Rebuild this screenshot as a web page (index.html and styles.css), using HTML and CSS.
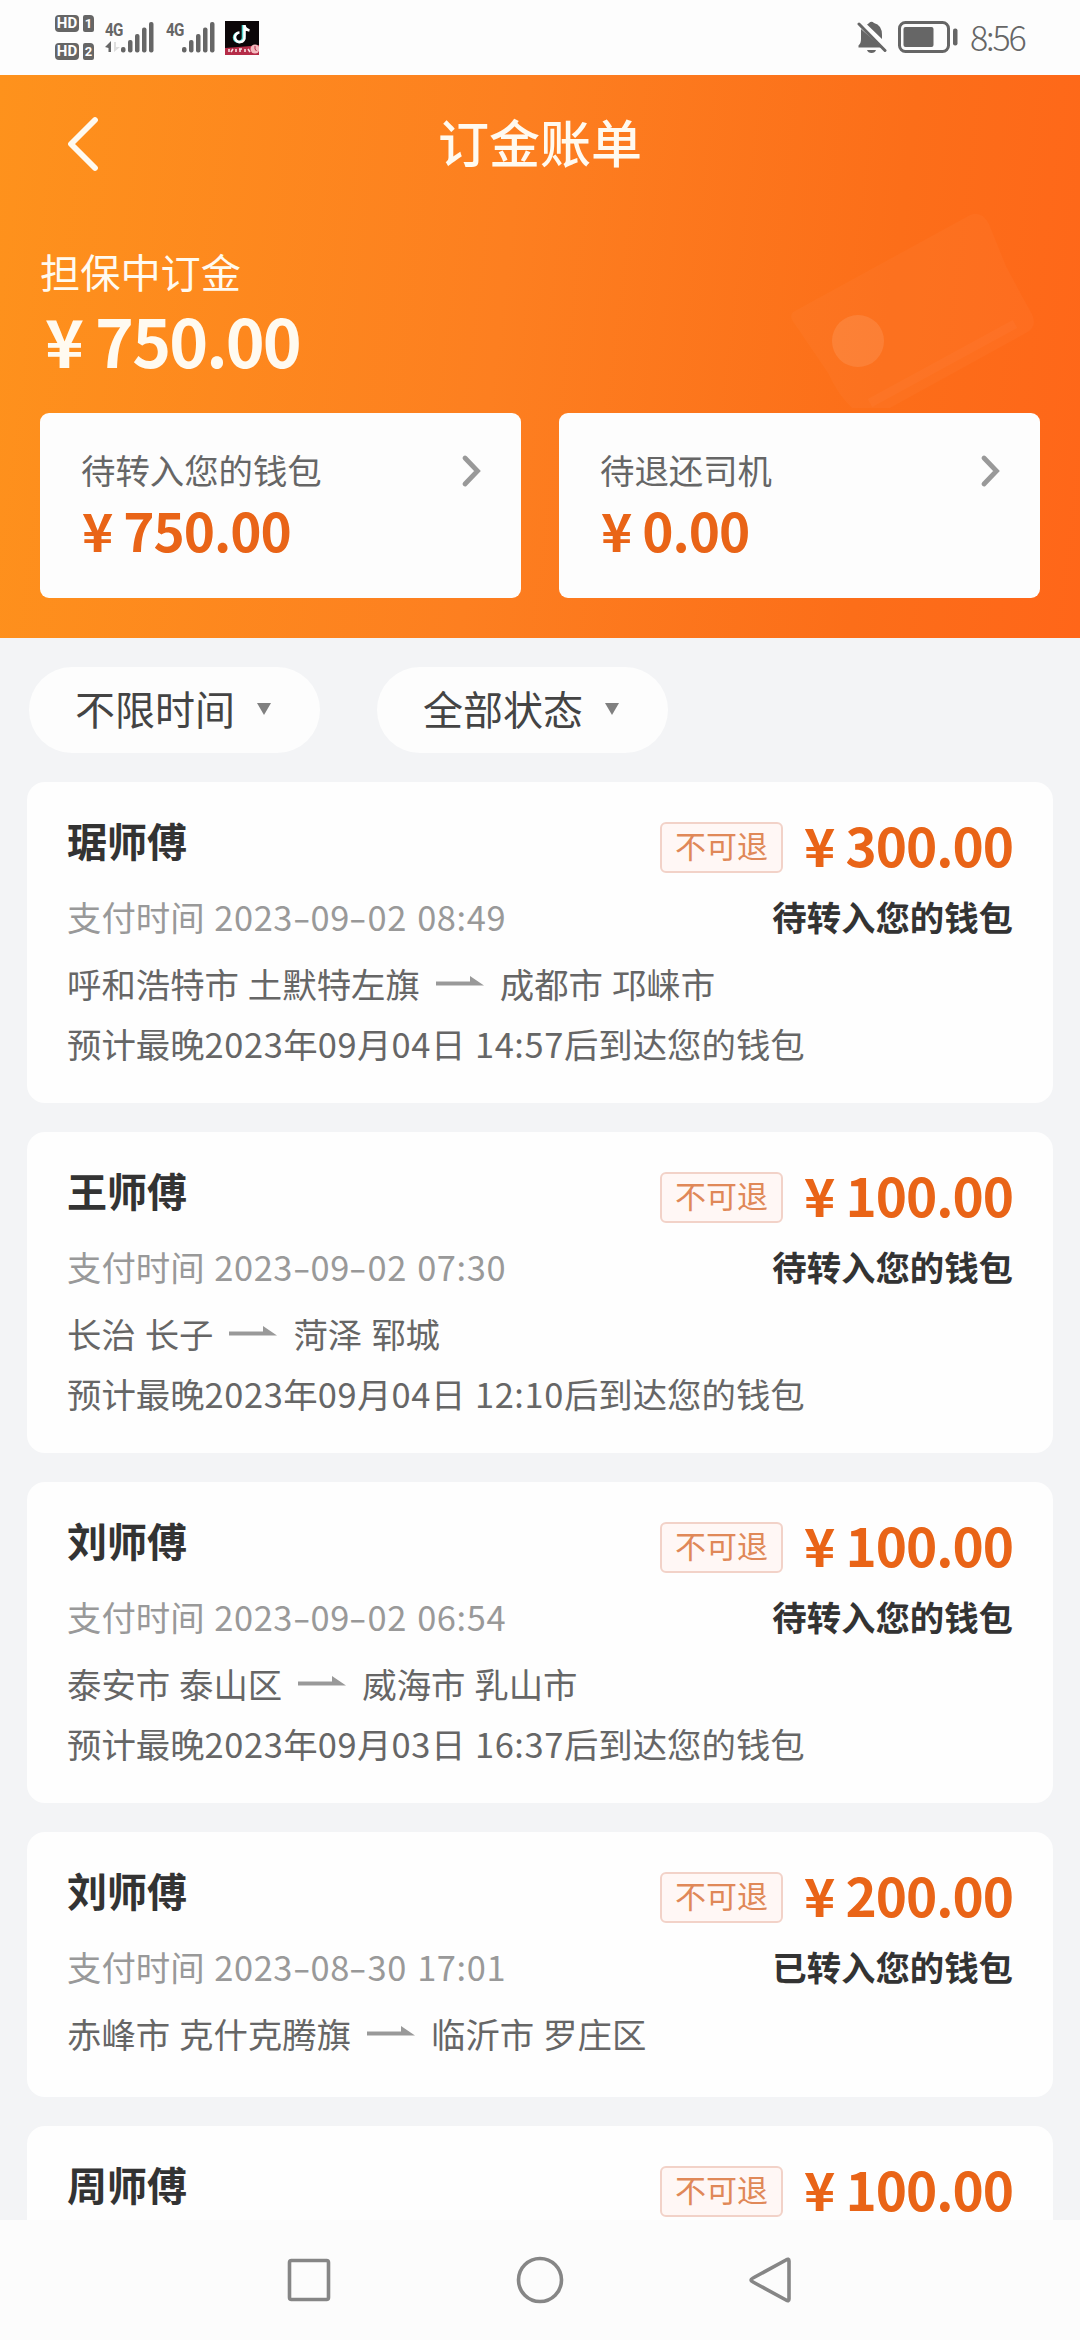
FILE: index.html
```html
<!DOCTYPE html>
<html lang="zh-CN">
<head>
<meta charset="utf-8">
<title>订金账单</title>
<link rel="stylesheet" href="styles.css">
</head>
<body>
<svg class="defs" width="0" height="0">
  <defs>
    <g id="bars"><rect x="0" y="25" width="4.5" height="5.5" rx="2"/><rect x="7" y="18" width="4.5" height="12.5" rx="2"/><rect x="14" y="12" width="4.5" height="18.5" rx="2"/><rect x="21" y="5.500" width="4.500" height="25" rx="2"/><rect x="28" y="0" width="4.500" height="30.500" rx="2"/></g>
    <symbol id="arrow" viewBox="0 0 48 12"><path d="M0 6.500H34V1L48 10.500H0Z" fill="#999"/></symbol>
    <symbol id="chevron" viewBox="0 0 20 34"><path d="M4 4 16.500 17 4 30" fill="none" stroke="#999" stroke-width="4.800" stroke-linecap="round"/></symbol>
  </defs>
</svg>
<div class="screen">
  <div class="status-bar">
    <div class="hd-group">
      <div class="hd-row"><b class="hd">HD</b><b class="sim">1</b></div>
      <div class="hd-row"><b class="hd">HD</b><b class="sim">2</b></div>
    </div>
    <div class="signal">
      <div class="net"><span>4G</span><svg width="16" height="12" viewBox="0 0 16 12"><path d="M0 6 6 0V11H3.500V7Z" fill="#666"/><path d="M9 1V11L15 6H11V1Z" fill="#ddd"/></svg></div>
      <svg width="33" height="31" fill="#666"><use href="#bars"/></svg>
    </div>
    <div class="signal second">
      <div class="net"><span>4G</span></div>
      <svg width="33" height="31" fill="#666"><use href="#bars"/></svg>
    </div>
    <svg class="app-icon" width="34" height="34" viewBox="0 0 34 34">
      <rect width="34" height="34" fill="#0b0608"/>
      <path d="M18 4V16A4.500 4.500 0 1 1 13.500 12" fill="none" stroke="#4fd8d4" stroke-width="2.600"/>
      <path d="M19.500 4V15.500A4.800 4.800 0 1 1 14.500 11.500M19.500 4.500Q20 8.500 24.500 9.500" fill="none" stroke="#fff" stroke-width="2.600"/>
      <path d="M0 27 26 25 34 24V34H0Z" fill="#b52c48"/><circle cx="30" cy="28" r="4.500" fill="#f3b9bd"/>
      <path d="M4 28V31M8 28 6 31M11 28V31M14 28H17M15 31V28M20 28V31M23 28 25 31" stroke="#f8dfe2" stroke-width="1.600"/><path d="M30 25V28L31.500 30" stroke="#b52c48" fill="none"/>
    </svg>
    <div class="status-right">
      <svg width="30" height="33" viewBox="0 0 30 33"><path d="M4 8 25 26.500H1.500V24.500Q4 22.500 4 18Z" fill="#666"/><path d="M10 3.500Q11.500 2.500 12 2Q14.500-.5 17 2Q25 4 25 14V18Z" fill="#666"/><path d="M10 29H19Q18 32 14.500 32T10 29" fill="#666"/><path d="M2 3 28 29.500" stroke="#666" stroke-width="3" stroke-linecap="round"/></svg>
      <svg class="battery" width="61" height="33" viewBox="0 0 61 33"><rect x="1.500" y="1.500" width="49" height="29" rx="6" fill="none" stroke="#666" stroke-width="3"/><rect x="5.500" y="6" width="30" height="20" rx="2" fill="#666"/><rect x="55" y="7.500" width="4.500" height="17" rx="2" fill="#666"/></svg>
      <span class="clock">8:56</span>
    </div>
  </div>

  <header class="header">
    <svg class="wallet" width="270" height="220" viewBox="0 0 270 220"><path d="M13 117 190 20Q202 15 209 29L226 71Q234 86 242 101L252 119Q258 132 246 138L110 213H72Q58 200 48 178L12 125Q10 120 13 117Z" fill="#fff" opacity=".028"/><path d="M90 208 235 129" stroke="#fff" stroke-width="9" opacity=".022"/><circle cx="78" cy="146" r="26" fill="#fff" opacity=".1"/></svg>
    <div class="title-row">
      <svg class="back" width="34" height="56" viewBox="0 0 34 56"><path d="M30 4 6 28 30 52" fill="none" stroke="#fffaf0" stroke-width="5.800" stroke-linecap="round" stroke-linejoin="round"/></svg>
      <h1>订金账单</h1>
    </div>
    <div class="total-label">担保中订金</div>
    <div class="total">¥ 750.00</div>
    <div class="boxes">
      <div class="box"><div class="box-top"><span>待转入您的钱包</span><svg width="20" height="34"><use href="#chevron"/></svg></div><div class="amount">¥ 750.00</div></div>
      <div class="box"><div class="box-top"><span>待退还司机</span><svg width="20" height="34"><use href="#chevron"/></svg></div><div class="amount">¥ 0.00</div></div>
    </div>
  </header>

  <main class="content">
    <div class="filters">
      <div class="pill">不限时间<i class="caret"></i></div>
      <div class="pill">全部状态<i class="caret"></i></div>
    </div>
    <div class="list">
      <section class="card">
        <div class="row head"><span class="name">琚师傅</span><span class="tag">不可退</span><span class="amount">¥ 300.00</span></div>
        <div class="row meta"><span class="time">支付时间 <span class="num">2023<i>-</i>09<i>-</i>02 08:49</span></span><b class="state">待转入您的钱包</b></div>
        <div class="row route"><span>呼和浩特市 土默特左旗</span><svg width="48" height="12"><use href="#arrow"/></svg><span>成都市 邛崃市</span></div>
        <div class="row eta">预计最晚<span class="num">2023</span>年<span class="num">09</span>月<span class="num">04</span>日 <span class="num">14:57</span>后到达您的钱包</div>
      </section>
      <section class="card">
        <div class="row head"><span class="name">王师傅</span><span class="tag">不可退</span><span class="amount">¥ 100.00</span></div>
        <div class="row meta"><span class="time">支付时间 <span class="num">2023<i>-</i>09<i>-</i>02 07:30</span></span><b class="state">待转入您的钱包</b></div>
        <div class="row route"><span>长治 长子</span><svg width="48" height="12"><use href="#arrow"/></svg><span>菏泽 郓城</span></div>
        <div class="row eta">预计最晚<span class="num">2023</span>年<span class="num">09</span>月<span class="num">04</span>日 <span class="num">12:10</span>后到达您的钱包</div>
      </section>
      <section class="card">
        <div class="row head"><span class="name">刘师傅</span><span class="tag">不可退</span><span class="amount">¥ 100.00</span></div>
        <div class="row meta"><span class="time">支付时间 <span class="num">2023<i>-</i>09<i>-</i>02 06:54</span></span><b class="state">待转入您的钱包</b></div>
        <div class="row route"><span>泰安市 泰山区</span><svg width="48" height="12"><use href="#arrow"/></svg><span>威海市 乳山市</span></div>
        <div class="row eta">预计最晚<span class="num">2023</span>年<span class="num">09</span>月<span class="num">03</span>日 <span class="num">16:37</span>后到达您的钱包</div>
      </section>
      <section class="card">
        <div class="row head"><span class="name">刘师傅</span><span class="tag">不可退</span><span class="amount">¥ 200.00</span></div>
        <div class="row meta"><span class="time">支付时间 <span class="num">2023<i>-</i>08<i>-</i>30 17:01</span></span><b class="state">已转入您的钱包</b></div>
        <div class="row route"><span>赤峰市 克什克腾旗</span><svg width="48" height="12"><use href="#arrow"/></svg><span>临沂市 罗庄区</span></div>
      </section>
      <section class="card last">
        <div class="row head"><span class="name">周师傅</span><span class="tag">不可退</span><span class="amount">¥ 100.00</span></div>
      </section>
    </div>
  </main>

  <nav class="nav">
    <svg width="50" height="50" viewBox="0 0 50 50"><rect x="5.500" y="5.500" width="39" height="39" rx="2" /></svg>
    <svg width="50" height="50" viewBox="0 0 50 50"><circle cx="25" cy="25" r="21.500"/></svg>
    <svg width="50" height="50" viewBox="0 0 50 50"><path d="M43 6V44Q43 47 40 45L7 27Q3 25 7 23L40 5Q43 3 43 6Z"/></svg>
  </nav>
</div>
</body>
</html>
```
FILE: styles.css
```css
* { box-sizing: border-box; }
body { margin: 0; font-family: "Noto Sans CJK SC", "Noto Sans", sans-serif; color: #666; }
svg { display: block; flex: none; }
.defs { position: absolute; }
.screen { width: 1080px; height: 2340px; display: flex; flex-direction: column; background: #f3f4f6; overflow: hidden; }

.status-bar { height: 75px; flex: none; background: #fdfdfd; display: flex; align-items: flex-start; padding: 0 55px; }
.hd-group { padding-top: 15px; display: flex; flex-direction: column; gap: 11px; width: 50px; }
.hd-row { display: flex; gap: 4px; height: 17px; }
.hd, .sim { background: #666; color: #fff; border-radius: 4px; font: bold 15px/17px "Roboto", sans-serif; text-align: center; height: 17px; }
.hd { width: 24px; }
.sim { width: 11px; border-radius: 2px 4px 2px 2px; font-size: 13px; }
.signal { display: flex; padding-top: 22px; width: 61px; }
.net { width: 16px; display: flex; flex-direction: column; gap: 3px; font: bold 19px/16px "Roboto", sans-serif; letter-spacing: -1px; color: #666; }
.net span { transform: scaleX(.8); transform-origin: left; white-space: nowrap; }
.signal.second { width: 59px; }
.app-icon { margin-top: 21px; }
.status-right { margin-left: auto; display: flex; padding-top: 21px; margin-right: -1px; }
.battery { margin-left: 11px; }
.clock { margin-left: 11px; font-size: 34px; line-height: 32px; font-weight: 300; letter-spacing: -2.1px; width: 56px; white-space: nowrap; }

.header { height: 563px; flex: none; position: relative; background: linear-gradient(97deg, #fe921c 0%, #fd7f20 46%, #fc6e19 80%, #ff6619 100%); color: #fffaf0; padding: 0 40px; }
.wallet { position: absolute; left: 780px; top: 120px; }
.title-row { height: 138px; display: flex; align-items: center; padding-left: 25px; }
.title-row h1 { margin: 0 auto; padding-right: 59px; font-size: 51px; line-height: 60px; font-weight: 500; transform: translateY(-3px); }
.total-label { padding-top: 35px; font-size: 40.2px; line-height: 46px; }
.total { margin-top: 9px; font-size: 66px; line-height: 72px; font-weight: 700; padding-left: 5px; letter-spacing: -1.9px; white-space: pre; }
.boxes { display: flex; gap: 38px; padding-top: 38px; }
.box { flex: 1; height: 185px; border-radius: 9px; background: #fdfdfd; padding: 34px 40px 0 41px; color: #666; }
.box-top { display: flex; justify-content: space-between; align-items: center; font-size: 34.4px; line-height: 44px; }
.box-top svg { margin-top: 3px; }
.amount { color: #e96417; font-size: 53px; line-height: 60px; font-weight: 700; white-space: pre; letter-spacing: -1px; }
.box .amount { margin-top: 8px; padding-left: 1px; }

.content { flex: 1; min-height: 0; overflow: hidden; padding: 29px 27px 0; }
.filters { display: flex; gap: 57px; padding-left: 2px; }
.pill { width: 291px; height: 86px; border-radius: 43px; background: #fdfdfd; display: flex; align-items: center; padding: 0 0 4px 46px; font-size: 40px; line-height: 60px; color: #444; }
.caret { margin: 2px 0 0 22px; border: 7px solid transparent; border-top: 12px solid #808080; border-bottom: 0; }
.list { display: flex; flex-direction: column; gap: 29px; padding-top: 29px; }
.card { background: #fefefe; border-radius: 18px; padding: 34px 40px 35px; flex: none; }
.row { display: flex; align-items: center; }
.head { height: 64px; }
.name { font-size: 40px; line-height: 46px; font-weight: 700; color: #333; padding-bottom: 16px; margin-right: auto; }
.tag { width: 123px; height: 51px; border: 2px solid #f2d2c8; border-radius: 6px; background: #fff7f5; color: #e08858; font-size: 31px; line-height: 42px; text-align: center; margin: 0 21px 2px 0; }
.head .amount { padding-bottom: 8px; }
.meta { height: 74px; justify-content: space-between; padding-bottom: 2px; font-size: 34.4px; }
.time { color: #999; word-spacing: 2px; }
.time i { font-style: normal; display: inline-block; transform: scaleX(1.5); margin: 0 2.5px; }
.num { letter-spacing: .6px; }
.state { color: #333; font-weight: 700; }
.route { height: 58px; font-size: 34.4px; gap: 16px; word-spacing: 1.2px; }
.route svg { margin-top: -4px; }
.eta { display: block; height: 62px; line-height: 62px; margin-bottom: -6px; font-size: 34.4px; white-space: pre; word-spacing: 2px; }
.last { height: 200px; }

.nav { height: 120px; flex: none; background: #fcfcfc; display: flex; justify-content: center; gap: 181px; align-items: center; }
.nav svg { fill: none; stroke: #868686; stroke-width: 3.6; }
```
